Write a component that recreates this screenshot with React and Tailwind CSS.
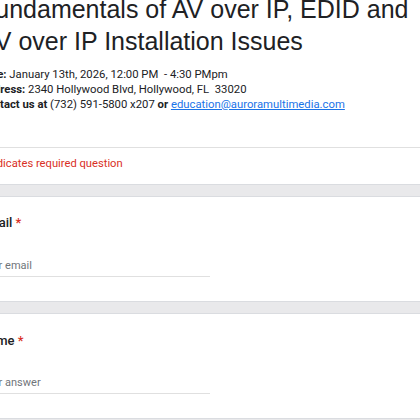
export default function App() {
  return (
    <div className="w-[420px] h-[420px] overflow-hidden bg-[#e9e9eb] font-['Roboto',Arial,sans-serif]">
      <div className="-ml-[20px] -mt-[7px] w-[640px] flex flex-col">
        <div className="bg-white border-b border-[#dadce0]">
          <div className="pb-[35px] border-b border-[#e0e0e0]">
            <h1 className="font-['Liberation_Sans',Arial,sans-serif] text-[25px] leading-[32px] text-[#202124] font-normal">
              Fundamentals of AV over IP, EDID and
              <br />
              AV over IP Installation Issues
            </h1>
            <div className="mt-[10px] text-[11.3px] leading-[15px] text-[#202124]">
              <div>
                <span className="font-bold">Date:</span> January 13th, 2026, 12:00 PM&nbsp; - 4:30 PMpm
              </div>
              <div>
                <span className="font-bold">Address:</span> 2340 Hollywood Blvd, Hollywood, FL&nbsp; 33020
              </div>
              <div>
                <span className="font-bold">Contact us at</span> (732) 591-5800 x207 <span className="font-bold">or</span>{" "}
                <a className="text-[#1a73e8] underline" href="#">education@auroramultimedia.com</a>
              </div>
            </div>
          </div>
          <div className="pt-[8px] pb-[12px] text-[11.2px] leading-[16px] text-[#d93025]">
            * Indicates required question
          </div>
        </div>

        <div className="mt-[11px] bg-white border-y border-[#dadce0] pt-[16px] pb-[24px]">
          <div className="text-[13px] leading-[20px] font-medium text-[#202124]">
            Email <span className="text-[#d93025]">*</span>
          </div>
          <div className="mt-[20px] w-[230px] h-[24px] pt-[5px] border-b border-[#e0e0e0] text-[11px] leading-[16px] text-[#70757a]">
            Your email
          </div>
        </div>

        <div className="mt-[11px] bg-white border-y border-[#dadce0] pt-[17px] pb-[24px]">
          <div className="text-[13px] leading-[20px] font-medium text-[#202124]">
            Name <span className="text-[#d93025]">*</span>
          </div>
          <div className="mt-[19px] w-[230px] h-[24px] pt-[5px] border-b border-[#e0e0e0] text-[11px] leading-[16px] text-[#70757a]">
            Your answer
          </div>
        </div>
      </div>
    </div>
  );
}
